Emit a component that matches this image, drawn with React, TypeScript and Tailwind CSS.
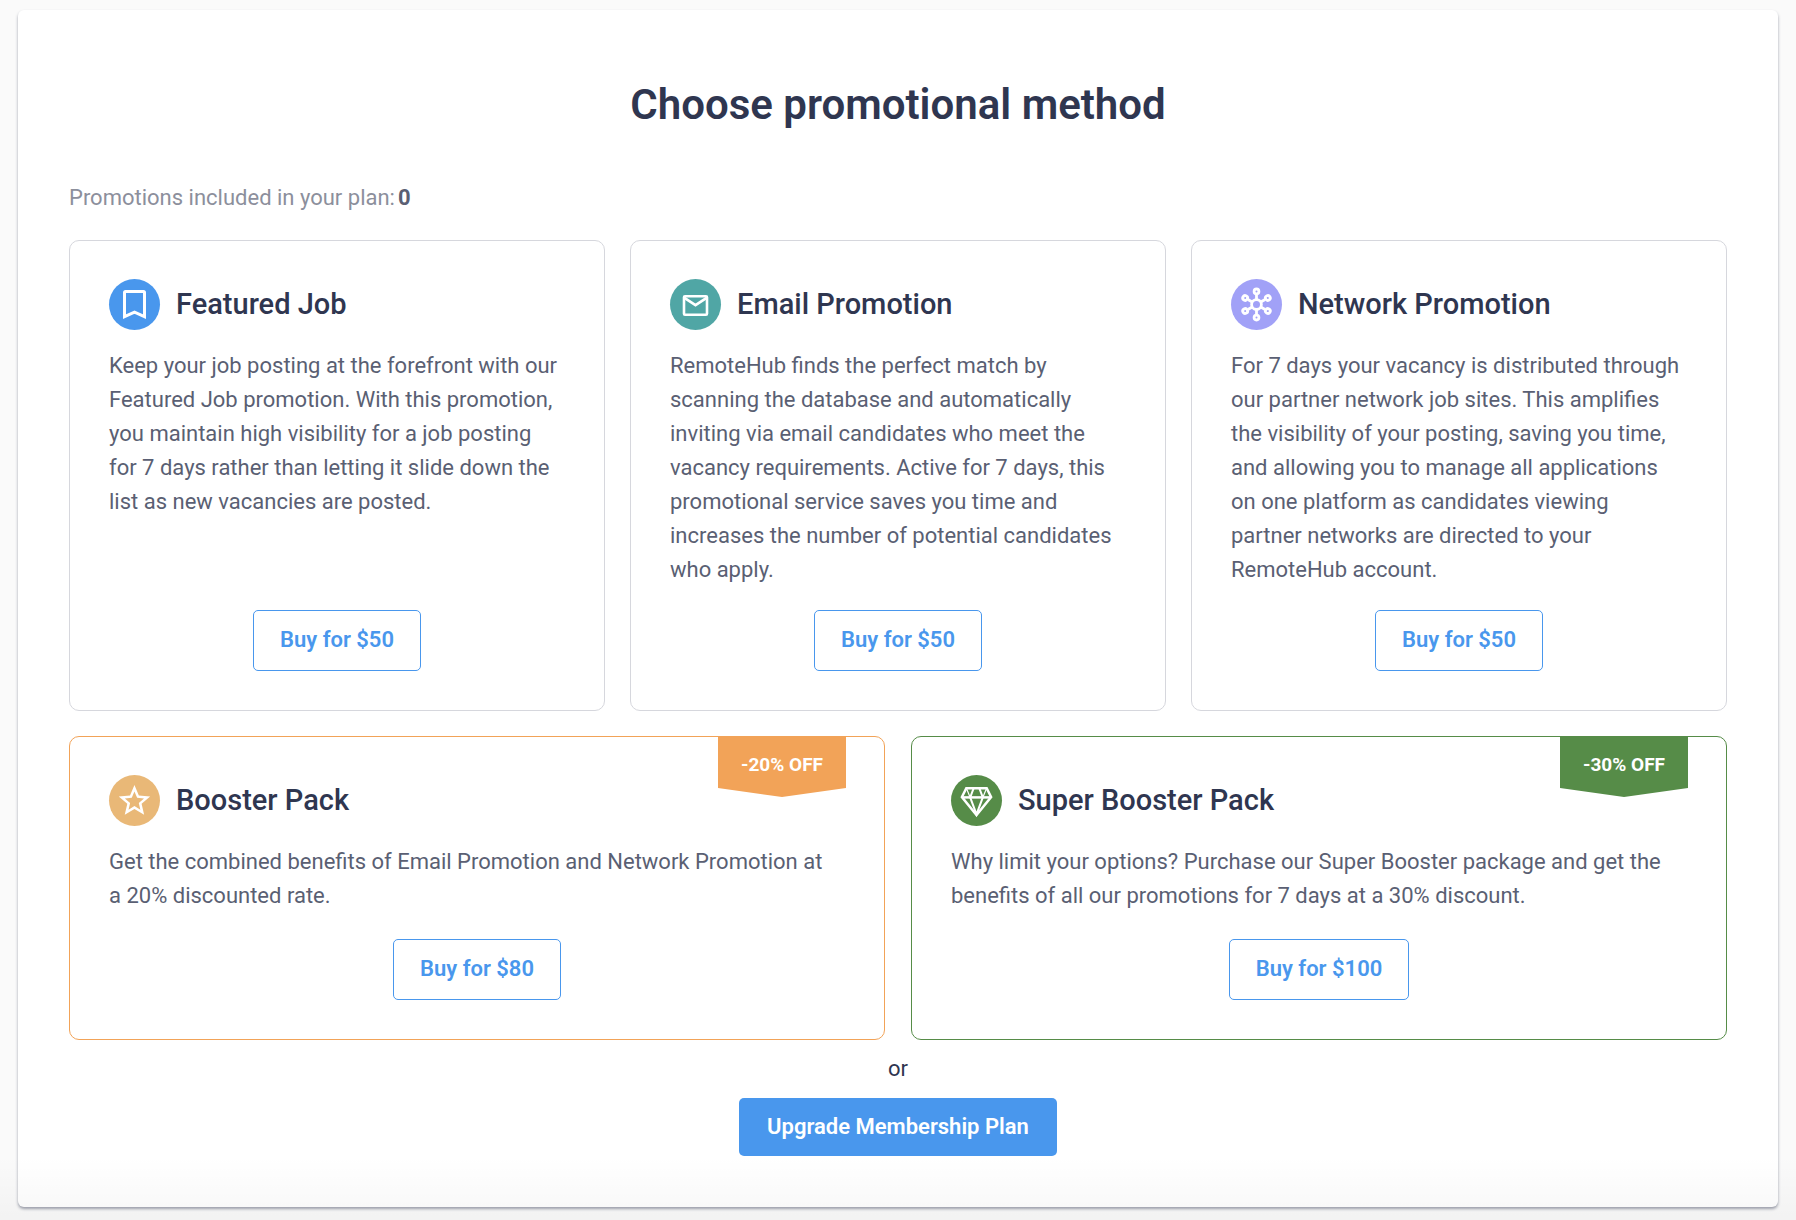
import type { ReactNode } from "react";

interface IPromotion {
    title: string
    description: string
    price: number
    icon: ReactNode
    iconColor: string
    borderColor: string
    discount?: string
    ribbonColor?: string
}

const BookmarkIcon = () => (
    <svg viewBox="0 0 51 51" className="size-full" fill="none" stroke="white" strokeWidth="3" aria-hidden="true">
        <path d="M15.5 37.6V13.5a1 1 0 0 1 1-1h18a1 1 0 0 1 1 1v24.1l-10-4.4z" />
    </svg>
)

const MailIcon = () => (
    <svg viewBox="0 0 51 51" className="size-full" fill="none" stroke="white" strokeWidth="2.6" aria-hidden="true">
        <rect x="14" y="17.3" width="23" height="18.4" rx="1" />
        <path d="M14 18.6l11.5 7.6L37 18.6" />
    </svg>
)

const NetworkIcon = () => (
    <svg viewBox="0 0 51 51" className="size-full" fill="none" stroke="white" strokeWidth="2.8" aria-hidden="true">
        <circle cx="25.5" cy="25.5" r="4.9" />
        {[0, 60, 120, 180, 240, 300].map(angle => (
            <g key={angle} transform={`rotate(${angle} 25.5 25.5)`}>
                <path d="M25.5 20.6v-5" />
                <circle cx="25.5" cy="12.4" r="2.4" />
            </g>
        ))}
    </svg>
)

const StarIcon = () => (
    <svg viewBox="0 0 51 51" className="size-full" fill="white" aria-hidden="true">
        <path
            transform="translate(6.6 6.9) scale(1.57)"
            d="M22 9.24l-7.19-.62L12 2 9.19 8.63 2 9.24l5.46 4.73L5.82 21 12 17.27 18.18 21l-1.63-7.03L22 9.24zM12 15.4l-3.76 2.27 1-4.28-3.32-2.88 4.38-.38L12 6.1l1.71 4.04 4.38.38-3.32 2.88 1 4.28L12 15.4z"
        />
    </svg>
)

const DiamondIcon = () => (
    <svg viewBox="0 0 51 51" className="size-full" fill="none" stroke="white" strokeWidth="2.5" aria-hidden="true">
        <path d="M15.3 13.2h20.4l4.4 8.8-14.6 18L10.9 22z" />
        <path d="M11 22.4h29" />
        <path d="M22.6 13.4l-3.4 9 6.3 17 6.3-17-3.4-9" strokeWidth="2" />
        <path d="M15.5 13.4l3.7 9M35.5 13.4l-3.7 9" strokeWidth="1.2" />
    </svg>
)

const promotions: IPromotion[] = [
    {
        title: "Featured Job",
        description: "Keep your job posting at the forefront with our Featured Job promotion. With this promotion, you maintain high visibility for a job posting for 7 days rather than letting it slide down the list as new vacancies are posted.",
        price: 50,
        icon: <BookmarkIcon />,
        iconColor: "bg-[#4997ed]",
        borderColor: "border-[#d6d7dd]",
    },
    {
        title: "Email Promotion",
        description: "RemoteHub finds the perfect match by scanning the database and automatically inviting via email candidates who meet the vacancy requirements. Active for 7 days, this promotional service saves you time and increases the number of potential candidates who apply.",
        price: 50,
        icon: <MailIcon />,
        iconColor: "bg-[#50a6a5]",
        borderColor: "border-[#d6d7dd]",
    },
    {
        title: "Network Promotion",
        description: "For 7 days your vacancy is distributed through our partner network job sites. This amplifies the visibility of your posting, saving you time, and allowing you to manage all applications on one platform as candidates viewing partner networks are directed to your RemoteHub account.",
        price: 50,
        icon: <NetworkIcon />,
        iconColor: "bg-[#a1a1f7]",
        borderColor: "border-[#d6d7dd]",
    },
]

const packs: IPromotion[] = [
    {
        title: "Booster Pack",
        description: "Get the combined benefits of Email Promotion and Network Promotion at a 20% discounted rate.",
        price: 80,
        icon: <StarIcon />,
        iconColor: "bg-[#e9b877]",
        borderColor: "border-[#f2a358]",
        discount: "-20% OFF",
        ribbonColor: "bg-[#f2a358]",
    },
    {
        title: "Super Booster Pack",
        description: "Why limit your options? Purchase our Super Booster package and get the benefits of all our promotions for 7 days at a 30% discount.",
        price: 100,
        icon: <DiamondIcon />,
        iconColor: "bg-[#568c48]",
        borderColor: "border-[#568c48]",
        discount: "-30% OFF",
        ribbonColor: "bg-[#568c48]",
    },
]

const PromotionCard = ({ promotion }: { promotion: IPromotion }) => (
    <article className={`relative flex min-h-[304px] flex-col rounded-[10px] border px-[39px] pt-[38px] pb-[39px] ${promotion.borderColor}`}>

        {/*Discount ribbon*/}
        {promotion.discount && (
            <div className={`absolute top-0 right-[38px] h-[60px] w-32 pt-[14px] text-center text-[19px] leading-[28px] font-bold text-white
                [clip-path:polygon(0_0,100%_0,100%_85%,50%_100%,0_85%)] ${promotion.ribbonColor}`}>
                {promotion.discount}
            </div>
        )}

        <div className="flex items-center gap-4">
            <div className={`size-[51px] shrink-0 rounded-full ${promotion.iconColor}`}>{promotion.icon}</div>
            <h2 className="pb-0.5 text-[29px] leading-[40px] font-medium text-[#2f3650]">{promotion.title}</h2>
        </div>

        <p className="mt-[19px] mb-[23px] pr-[7px] text-[22px] leading-[34px] text-[#5a5f73]">{promotion.description}</p>

        <button
            type="button"
            className="mt-auto self-center rounded-[5px] border border-[#4997ed] px-[26px] pt-3 pb-[14px] text-[22px] leading-[33px] font-semibold text-[#4997ed]"
        >
            Buy for ${promotion.price}
        </button>
    </article>
)

export default function App() {
    return (
        <div className="relative min-h-screen bg-[#fafafa] px-[18px] pt-[10px] pb-[13px] font-[Roboto,sans-serif]">
            <main className="flex flex-col rounded-md bg-white px-[51px] pt-[65px] pb-[51px] shadow-[0_2px_3px_rgba(47,54,80,0.45)]">
                <h1 className="text-center text-[42px] leading-[60px] font-semibold text-[#2f3650]">Choose promotional method</h1>

                <p className="mt-[46px] text-[22px] leading-[34px] text-[#8c8f9c]">
                    Promotions included in your plan:<span className="ml-[3px] font-bold text-[#5a5f73]">0</span>
                </p>

                <div className="mt-[25px] grid grid-cols-3 gap-[25px]">
                    {promotions.map(promotion => <PromotionCard key={promotion.title} promotion={promotion} />)}
                </div>

                <div className="mt-[25px] grid grid-cols-2 gap-[26px]">
                    {packs.map(pack => <PromotionCard key={pack.title} promotion={pack} />)}
                </div>

                <p className="mt-3 text-center text-[22px] leading-[34px] text-[#2f3650]">or</p>

                <button
                    type="button"
                    className="mt-3 self-center rounded-[5px] bg-[#4997ed] px-[28px] py-3 text-[22px] leading-[34px] font-semibold text-white"
                >
                    Upgrade Membership Plan
                </button>
            </main>

            {/*Fade at the bottom of the page*/}
            <div className="pointer-events-none absolute inset-x-0 bottom-0 h-16 bg-gradient-to-b from-transparent to-black/3" />
        </div>
    );
}
